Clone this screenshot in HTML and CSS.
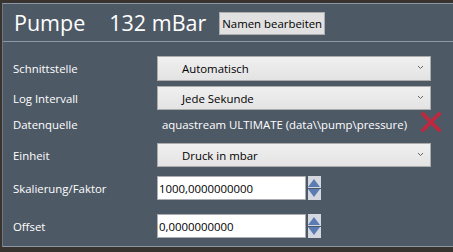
FILE: index.html
```html
<!DOCTYPE html>
<html lang="de">
<head>
  <meta charset="UTF-8">
  <title>Pumpe</title>
  <link rel="stylesheet" href="styles.css">
</head>
<body>
  <div class="frame">
    <div class="panel">
      <div class="header">
        <span class="title">Pumpe</span>
        <span class="title value">132 mBar</span>
        <button class="rename-btn">Namen bearbeiten</button>
      </div>

      <div class="settings">
        <div class="row row-first">
          <div class="label">Schnittstelle</div>
          <div class="select">Automatisch
            <svg class="chevron" width="7" height="5" viewBox="0 0 7 5"><path d="M1 1 L3.5 3.5 L6 1" fill="none" stroke="#666" stroke-width="1"/></svg>
          </div>
        </div>
        <div class="row">
          <div class="label">Log Intervall</div>
          <div class="select">Jede Sekunde
            <svg class="chevron" width="7" height="5" viewBox="0 0 7 5"><path d="M1 1 L3.5 3.5 L6 1" fill="none" stroke="#666" stroke-width="1"/></svg>
          </div>
        </div>
        <div class="row row-source">
          <div class="label">Datenquelle</div>
          <div class="source">aquastream ULTIMATE (data\\pump\pressure)</div>
          <svg class="remove" width="22" height="20" viewBox="0 0 22 20">
            <path d="M3 2 L19 18 M19 2 L3 18" stroke="#c1273d" stroke-width="3.6" stroke-linecap="square"/>
          </svg>
        </div>
        <div class="row">
          <div class="label">Einheit</div>
          <div class="select">Druck in mbar
            <svg class="chevron" width="7" height="5" viewBox="0 0 7 5"><path d="M1 1 L3.5 3.5 L6 1" fill="none" stroke="#666" stroke-width="1"/></svg>
          </div>
        </div>
        <div class="row row-num">
          <div class="label">Skalierung/Faktor</div>
          <input class="num-input" type="text" value="1000,0000000000">
          <div class="spinner">
            <span class="spin-up"></span>
            <span class="spin-down"></span>
          </div>
        </div>
        <div class="row row-offset">
          <div class="label">Offset</div>
          <input class="num-input" type="text" value="0,0000000000">
          <div class="spinner">
            <span class="spin-up"></span>
            <span class="spin-down"></span>
          </div>
        </div>
      </div>
    </div>
  </div>
</body>
</html>
```

FILE: styles.css
```css
/* Basic Reset */
* {
  margin: 0;
  padding: 0;
  box-sizing: border-box;
}

body {
  width: 453px;
  height: 252px;
  overflow: hidden;
  background: #38332f;
  font-family: 'Open Sans', 'Noto Sans', sans-serif;
  font-size: 11.4px;
  color: #fff;
}

/* Dark window edge round the panel */
.frame {
  padding: 3px 0 0 2px;
}

.panel {
  height: 244px;
  background: #4e5966;
  border-top: 1px solid #8e98a2;
  border-left: 1px solid #6f7983;
  border-bottom: 1px solid #8e98a2;
}

/* Title bar */
.header {
  height: 38px;
  display: flex;
  align-items: center;
  padding-left: 11px;
  border-bottom: 1px solid #8e98a2;
}
.title {
  font-size: 21.5px;
  font-weight: 400;
  color: #fff;
  margin-top: -1px;
}
.title.value {
  margin-left: 24px;
}
.rename-btn {
  margin-left: 13px;
  height: 23px;
  padding: 0 2px;
  font-family: inherit;
  font-size: 11.4px;
  color: #000;
  background: #e1e1e1;
  border: 1px solid #adadad;
  margin-top: 2px;
}

/* Settings rows */
.settings {
  padding-top: 14px;
}
.row {
  display: flex;
  align-items: center;
  height: 24px;
  margin-top: 5px;
  white-space: nowrap;
}
.row-first {
  margin-top: 0;
  height: 25px;
}
.row-source {
  height: 28px;
  margin-top: 0;
}
.row-num {
  margin-top: 9px;
}
.row-offset {
  margin-top: 14px;
}
.label {
  width: 154px;
  padding-left: 10px;
  flex-shrink: 0;
}

.select {
  position: relative;
  width: 274px;
  height: 100%;
  display: flex;
  align-items: center;
  padding-left: 24px;
  color: #000;
  background: linear-gradient(#f0f0f0, #e3e3e3);
  border: 1px solid #acacac;
}
.chevron {
  position: absolute;
  right: 6px;
  top: 8px;
}

.source {
  padding-left: 5px;
}
.remove {
  margin-left: 13px;
  margin-top: -4px;
  flex-shrink: 0;
}

.num-input {
  width: 149px;
  height: 100%;
  padding-left: 1px;
  font-family: inherit;
  font-size: 11.4px;
  color: #000;
  background: #fff;
  border: 1px solid #abadb3;
  outline: none;
}
.spinner {
  margin-left: 2px;
  width: 13px;
  height: 100%;
  display: flex;
  flex-direction: column;
  gap: 1px;
}
.spinner span {
  flex: 1;
  position: relative;
  background: #d3d8e0;
}
.spinner span:after {
  content: '';
  position: absolute;
  left: 0;
  border-left: 6.5px solid transparent;
  border-right: 6.5px solid transparent;
}
.spin-up:after {
  top: 3px;
  border-bottom: 8px solid #5b7cb2;
}
.spin-down:after {
  top: 0;
  border-top: 8px solid #5b7cb2;
}
```
